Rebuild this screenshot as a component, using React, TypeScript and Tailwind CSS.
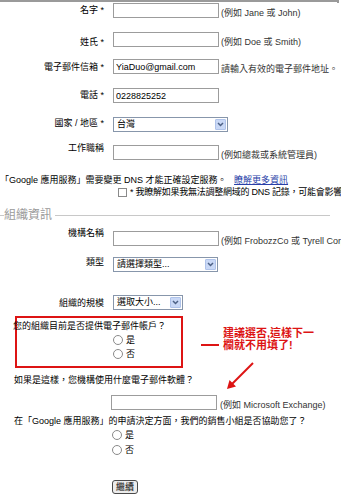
import type { ReactNode } from "react";

const FONT = "font-['Liberation_Sans','Noto_Sans_CJK_TC',sans-serif]";

function TextBox({ value }: { value?: string }) {
  return (
    <input
      readOnly
      defaultValue={value ?? ""}
      className="block w-[106px] h-[15px] border border-[#9c9c9c] bg-white px-[2px] text-[9px] leading-[13px] text-black outline-none"
    />
  );
}

function Select({ w, value }: { w: string; value: string }) {
  return (
    <div className={`flex items-center h-[15px] ${w} border border-[#8796ab] bg-white`}>
      <span className="flex-1 pl-[3px] leading-[13px] whitespace-nowrap overflow-hidden">{value}</span>
      <span className="w-[11px] h-[11px] mr-[1px] flex items-center justify-center bg-[#c9d8f6] border border-[#afc3ea] rounded-[1px]">
        <svg width="7" height="5" viewBox="0 0 7 5">
          <path d="M1 1l2.5 2.5L6 1" stroke="#4d6185" strokeWidth="1.5" fill="none" />
        </svg>
      </span>
    </div>
  );
}

function Radio({ label }: { label: string }) {
  return (
    <div className="flex items-center h-[12px] gap-[3px]">
      <span className="w-[10px] h-[10px] rounded-full border border-[#8a8a8a] bg-white" />
      <span className="leading-[12px]">{label}</span>
    </div>
  );
}

interface RowProps {
  label: string;
  star?: boolean;
  h: string;
  lt?: string;
  hint?: string;
  children: ReactNode;
}

function Row({ label, star, h, lt, hint, children }: RowProps) {
  return (
    <div className={`flex items-start ${h}`}>
      <div className={`w-[104px] shrink-0 text-right leading-[12px] whitespace-nowrap ${lt ?? ""}`}>
        {label}
        {star && " *"}
      </div>
      <div className="ml-[9px] shrink-0">{children}</div>
      {hint && <div className="ml-[2px] pt-[4px] leading-[12px] text-[#333] whitespace-nowrap">{hint}</div>}
    </div>
  );
}

export default function App() {
  return (
    <div className={`relative w-[341px] h-[500px] overflow-hidden bg-white text-[9px] text-black ${FONT}`}>
      <div className="w-[339px] h-[3px] border-t-2 border-r-2 border-[#9a9a9a]" />

      <Row label="名字" star h="h-[29px]" lt="pt-[1px]" hint="(例如 Jane 或 John)">
        <TextBox />
      </Row>
      <Row label="姓氏" star h="h-[27px]" lt="pt-[4px]" hint="(例如 Doe 或 Smith)">
        <TextBox />
      </Row>
      <Row label="電子郵件信箱" star h="h-[29px]" lt="pt-[2px]" hint="請輸入有效的電子郵件地址。">
        <TextBox value="YiaDuo@gmail.com" />
      </Row>
      <Row label="電話" star h="h-[29px]" lt="pt-[1px]">
        <TextBox value="0228825252" />
      </Row>
      <Row label="國家 / 地區" star h="h-[28px]">
        <Select w="w-[115px]" value="台灣" />
      </Row>
      <Row label="工作職稱" h="h-[29px]" lt="-mt-[3px]" hint="(例如總裁或系統管理員)">
        <TextBox />
      </Row>

      <div className="h-[12px] leading-[12px] whitespace-nowrap">
        「Google 應用服務」需要變更 DNS 才能正確設定服務。{" "}
        <span className="ml-[5px] text-[#2a3fa8] underline">瞭解更多資訊</span>
      </div>
      <div className="flex items-center h-[12px] pl-[118px] whitespace-nowrap">
        <span className="w-[9px] h-[9px] shrink-0 border border-[#8a8a8a] bg-white" />
        <span className="ml-[3px] leading-[12px] tracking-[-0.25px]">* 我瞭解如果我無法調整網域的 DNS 記錄，可能會影響</span>
      </div>

      <div className="mt-[9px] flex items-center h-[16px] w-[330px]">
        <span className="w-[4px] h-px bg-[#c8c8c8]" />
        <span className="text-[12px] leading-[16px] text-[#9a9a9a] whitespace-nowrap">組織資訊</span>
        <span className="flex-1 ml-[3px] h-px bg-[#c8c8c8]" />
      </div>

      <div className="mt-[8px]">
        <Row label="機構名稱" h="h-[26px]" lt="-mt-[4px]" hint="(例如 FrobozzCo 或 Tyrell Corp">
          <TextBox />
        </Row>
        <Row label="類型" h="h-[38px]" lt="-mt-[1px]">
          <Select w="w-[105px]" value="請選擇類型..." />
        </Row>
        <Row label="組織的規模" h="h-[21px]" lt="pt-[2px]">
          <Select w="w-[70px]" value="選取大小..." />
        </Row>
      </div>

      <div className="ml-[15px] w-[168px] h-[52px] border-2 border-[#dd1414]">
        <div className="-ml-[4px] mt-[2px] leading-[12px] whitespace-nowrap">您的組織目前是否提供電子郵件帳戶？</div>
        <div className="pl-[96px] mt-[2px] flex flex-col gap-[2px]">
          <Radio label="是" />
          <Radio label="否" />
        </div>
      </div>

      <div className="mt-[6px] ml-[14px] h-[12px] leading-[12px] whitespace-nowrap">
        如果是這樣，您機構使用什麼電子郵件軟體？
      </div>
      <div className="mt-[9px] flex items-start h-[15px] pl-[111px]">
        <TextBox />
        <div className="ml-[3px] pt-[4px] leading-[12px] text-[#333] whitespace-nowrap">(例如 Microsoft Exchange)</div>
      </div>
      <div className="mt-[5px] ml-[14px] h-[12px] leading-[12px] whitespace-nowrap">
        在「Google 應用服務」的申請決定方面，我們的銷售小組是否協助您了？
      </div>
      <div className="pl-[112px] mt-[2px] flex flex-col gap-[3px]">
        <Radio label="是" />
        <Radio label="否" />
      </div>

      <button className="block mt-[24px] ml-[112px] h-[14px] px-[3px] border border-[#4a4a4a] rounded-[3px] bg-[#ececec] text-[9px] leading-[12px]">
        繼續
      </button>

      {/* annotation */}
      <div className="absolute left-[201px] top-[344px] w-[18px] h-[2px] bg-[#dd1414]" />
      <div className="absolute left-[223px] top-[327px] text-[11px] leading-[12px] font-bold text-[#dd1414] whitespace-nowrap">
        <div>建議選否,這樣下一</div>
        <div>欄就不用填了!</div>
      </div>
      <svg className="absolute left-[220px] top-[355px]" width="40" height="40" viewBox="0 0 40 40">
        <path d="M33 8L11 30" stroke="#dd1414" strokeWidth="2" fill="none" />
        <path d="M7 34L9.5 25L16 31.5Z" fill="#dd1414" />
      </svg>
    </div>
  );
}
